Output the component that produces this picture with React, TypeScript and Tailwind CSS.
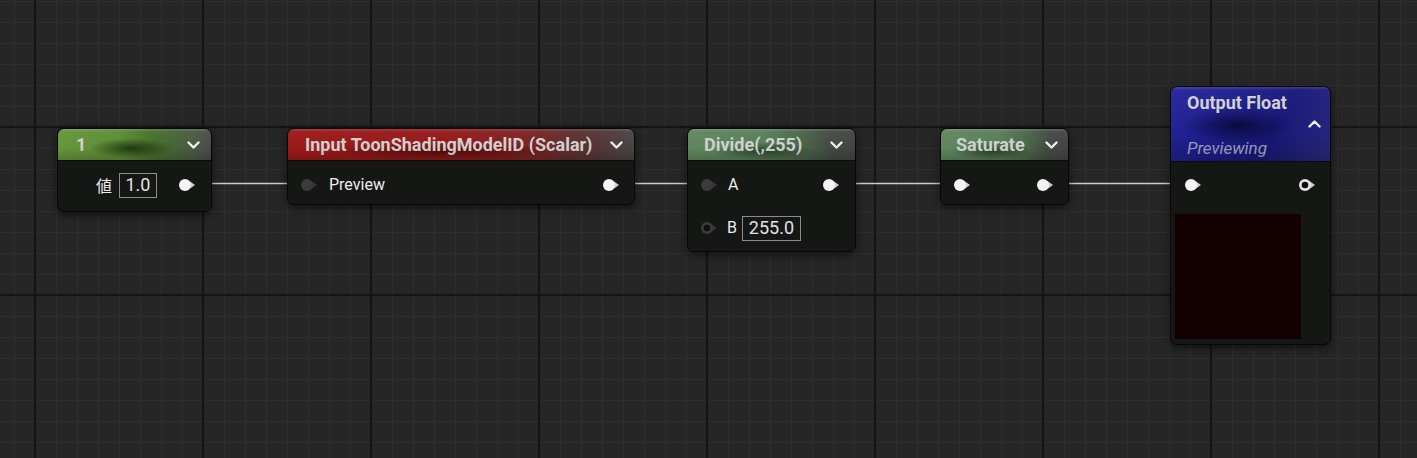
import React from 'react';

type PinKind = 'on' | 'off' | 'ringOff' | 'ringOn';

// Material graph pin: circle with a small arrow on the right
function Pin({ kind = 'on' }: { kind?: PinKind }) {
  const fill = kind === 'on' ? '#f4f4f4' : kind === 'ringOn' ? '#e4e4e4' : '#3a3b3a';
  const tip = kind === 'on' || kind === 'ringOn' ? '#cfcfcf' : '#333433';
  const ring = kind === 'ringOff' || kind === 'ringOn';
  return (
    <svg width="18" height="12" viewBox="0 0 18 12" className="shrink-0">
      <path d="M10.5 2 L16 6 L10.5 10 Z" fill={tip} />
      <circle cx="6" cy="6" r="6" fill={fill} />
      {ring && <circle cx="6" cy="6" r="3.3" fill="#0e0f0e" />}
    </svg>
  );
}

function Chevron({ up }: { up?: boolean }) {
  return (
    <svg width="13" height="8" viewBox="0 0 13 8" className="shrink-0">
      <path
        d={up ? 'M1.5 6.5 L6.5 1.5 L11.5 6.5' : 'M1.5 1.5 L6.5 6.5 L11.5 1.5'}
        fill="none"
        stroke="#f2f2f2"
        strokeWidth="2.4"
        strokeLinecap="round"
        strokeLinejoin="round"
      />
    </svg>
  );
}

function ValueBox({ value, width }: { value: string; width: string }) {
  return (
    <div
      className={`${width} h-[25px] flex items-center justify-center border border-[#8c8c8c] text-[18px] text-[#e2e2e2] leading-none`}
    >
      {value}
    </div>
  );
}

const nodeBase =
  'absolute rounded-[7px] bg-[#151715] border border-[#070707] shadow-[0_3px_8px_rgba(0,0,0,0.55)] overflow-hidden';
const headerBase =
  'relative flex items-center justify-between text-[18px] font-bold text-[#d0d0d0] border-b border-[#0b0b0b] leading-none';
const gloss =
  'after:absolute after:inset-0 after:content-[""] after:bg-[linear-gradient(180deg,rgba(255,255,255,0.16)_0px,rgba(255,255,255,0.03)_3px,transparent_60%,rgba(0,0,0,0.18)_100%)]';

export default function App() {
  return (
    <div className="relative w-[1417px] h-[458px] overflow-hidden bg-[#262626] font-[Roboto,sans-serif]">
      {/* grid + wires */}
      <svg className="absolute inset-0" width="1417" height="458">
        <defs>
          <pattern id="grid" x="35" y="-41" width="168" height="168" patternUnits="userSpaceOnUse">
            {[21, 42, 63, 84, 105, 126, 147].map((p) => (
              <g key={p}>
                <rect x={p} y="0" width="1" height="168" fill="#2e2e2e" />
                <rect x="0" y={p} width="168" height="1" fill="#2e2e2e" />
              </g>
            ))}
            <rect x="0" y="0" width="1.2" height="168" fill="#151515" />
            <rect x="166.8" y="0" width="1.2" height="168" fill="#151515" />
            <rect x="0" y="0" width="168" height="1.2" fill="#151515" />
            <rect x="0" y="166.8" width="168" height="1.2" fill="#151515" />
          </pattern>
        </defs>
        <rect width="1417" height="458" fill="url(#grid)" />
        <g stroke="#cdcdcd" strokeWidth="1.6">
          <line x1="196" y1="183.5" x2="302" y2="183.5" />
          <line x1="620" y1="183.5" x2="702" y2="183.5" />
          <line x1="840" y1="183.5" x2="955" y2="183.5" />
          <line x1="1053" y1="183.5" x2="1186" y2="183.5" />
        </g>
      </svg>

      {/* Constant node */}
      <div className={`${nodeBase} left-[57px] top-[128px] w-[155px] h-[84px]`}>
        <div
          className={`${headerBase} ${gloss} h-[32px] pl-[18px] pr-[11px] bg-[radial-gradient(ellipse_42px_10px_at_48%_62%,rgba(24,44,12,0.85),transparent),linear-gradient(90deg,#66963b_0%,#5c8c35_40%,#46702b_62%,#4a5a42_88%,#4b4b4b_100%)]`}
        >
          <span className="relative">1</span>
          <Chevron />
        </div>
        <div className="flex items-center justify-end h-[28px] mt-[10px] pr-[14px] text-[16px] text-[#ececec]">
          <span className="font-['Noto_Sans_CJK_JP',Roboto,sans-serif]">値</span>
          <div className="ml-[7px]">
            <ValueBox value="1.0" width="w-[38px]" />
          </div>
          <div className="ml-[22px]">
            <Pin />
          </div>
        </div>
      </div>

      {/* Parameter node */}
      <div className={`${nodeBase} left-[287px] top-[128px] w-[348px] h-[77px]`}>
        <div
          className={`${headerBase} ${gloss} h-[32px] pl-[17px] pr-[11px] bg-[radial-gradient(ellipse_120px_9px_at_45%_72%,rgba(60,6,6,0.7),transparent),linear-gradient(90deg,#9c1818_0%,#941a1a_50%,#7e2222_68%,#573232_86%,#4a4444_100%)]`}
        >
          <span className="relative">Input ToonShadingModelID (Scalar)</span>
          <Chevron />
        </div>
        <div className="flex items-center h-[28px] mt-[10px] pl-[13px] pr-[13px] text-[16px] text-[#ececec]">
          <Pin kind="off" />
          <span className="ml-[10px]">Preview</span>
          <div className="flex-1" />
          <Pin />
        </div>
      </div>

      {/* Divide node */}
      <div className={`${nodeBase} left-[687px] top-[128px] w-[169px] h-[124px]`}>
        <div
          className={`${headerBase} ${gloss} h-[32px] pl-[16px] pr-[12px] bg-[radial-gradient(ellipse_50px_9px_at_45%_72%,rgba(20,36,20,0.65),transparent),linear-gradient(90deg,#5f875e_0%,#587f57_45%,#4b6a4b_65%,#434b43_85%,#444444_100%)]`}
        >
          <span className="relative">Divide(,255)</span>
          <Chevron />
        </div>
        <div className="flex items-center h-[28px] mt-[10px] pl-[13px] pr-[14px] text-[16px] text-[#ececec]">
          <Pin kind="off" />
          <span className="ml-[9px]">A</span>
          <div className="flex-1" />
          <Pin />
        </div>
        <div className="flex items-center h-[28px] mt-[15px] pl-[13px] text-[16px] text-[#ececec]">
          <Pin kind="ringOff" />
          <span className="ml-[8px]">B</span>
          <div className="ml-[5px]">
            <ValueBox value="255.0" width="w-[59px]" />
          </div>
        </div>
      </div>

      {/* Saturate node */}
      <div className={`${nodeBase} left-[940px] top-[128px] w-[129px] h-[77px]`}>
        <div
          className={`${headerBase} ${gloss} h-[32px] pl-[15px] pr-[10px] bg-[radial-gradient(ellipse_40px_9px_at_40%_72%,rgba(20,36,20,0.65),transparent),linear-gradient(90deg,#5f875e_0%,#587f57_45%,#4b6a4b_65%,#434b43_85%,#444444_100%)]`}
        >
          <span className="relative">Saturate</span>
          <Chevron />
        </div>
        <div className="flex items-center h-[28px] mt-[10px] pl-[13px] pr-[13px]">
          <Pin />
          <div className="flex-1" />
          <Pin />
        </div>
      </div>

      {/* Output node */}
      <div className={`${nodeBase} left-[1170px] top-[86px] w-[161px] h-[259px]`}>
        <div
          className={`${headerBase} ${gloss} h-[75px] pl-[16px] pr-[9px] items-stretch bg-[radial-gradient(ellipse_55px_18px_at_42%_52%,rgba(6,6,50,0.85),transparent),linear-gradient(120deg,#25259c_0%,#1d1d8a_40%,#181878_65%,#2a2a80_100%)]`}
        >
          <div className="relative flex flex-col justify-between pt-[7px] pb-[4px]">
            <span>Output Float</span>
            <span className="italic font-normal text-[17px] text-[#a8a8cc]">Previewing</span>
          </div>
          <div className="relative flex items-center">
            <Chevron up />
          </div>
        </div>
        <div className="flex items-center h-[28px] mt-[9px] pl-[14px] pr-[13px]">
          <Pin />
          <div className="flex-1" />
          <Pin kind="ringOn" />
        </div>
        <div className="mt-[15px] ml-[4px] w-[126px] h-[125px] bg-[#130001]" />
      </div>
    </div>
  );
}
